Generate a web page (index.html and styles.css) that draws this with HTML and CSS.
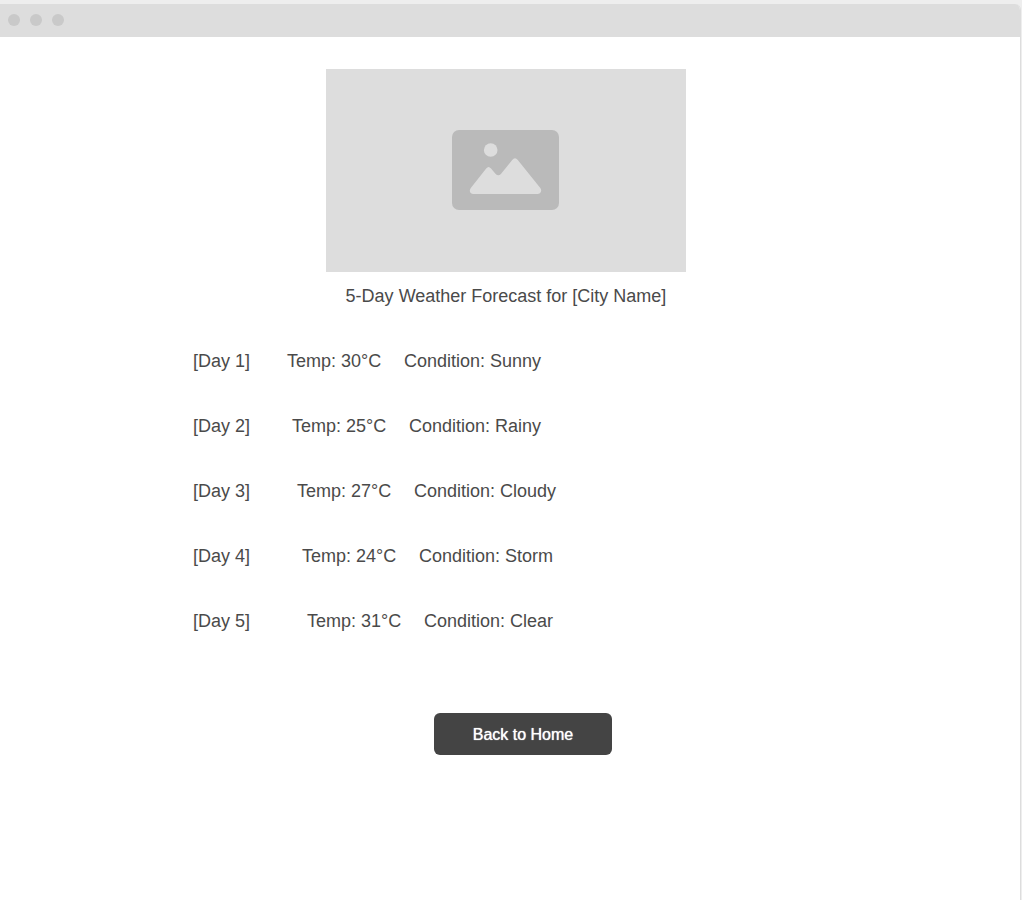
FILE: index.html
```html
<!DOCTYPE html>
<html lang="en">
<head>
<meta charset="utf-8">
<title>5-Day Weather Forecast</title>
<link rel="stylesheet" href="styles.css">
</head>
<body>
<div class="window">
  <header class="titlebar">
    <span class="dot"></span>
    <span class="dot"></span>
    <span class="dot"></span>
  </header>
  <main class="content">
    <div class="picture">
      <svg class="picture-icon" viewBox="0 0 107 80" role="img" aria-label="Picture placeholder">
        <rect width="107" height="80" rx="7" fill="#bababa"/>
        <circle cx="38.700" cy="20" r="6.800" fill="#ddd"/>
        <path d="M18.800 58 34.200 38.400Q36.600 35.400 39 38.400L43.700 44Q46.300 46.600 48.900 44L60.200 29.900Q63 26.400 65.800 29.900L88.300 58C90.300 60.800 88.800 64 85.300 64H21.500C18 64 16.700 60.800 18.800 58Z" fill="#ddd"/>
      </svg>
    </div>
    <h1 class="title">5-Day Weather Forecast for [City Name]</h1>
    <ul class="forecast">
      <li class="day"><span>[Day 1]</span><span>Temp: 30°C</span><span>Condition: Sunny</span></li>
      <li class="day"><span>[Day 2]</span><span>Temp: 25°C</span><span>Condition: Rainy</span></li>
      <li class="day"><span>[Day 3]</span><span>Temp: 27°C</span><span>Condition: Cloudy</span></li>
      <li class="day"><span>[Day 4]</span><span>Temp: 24°C</span><span>Condition: Storm</span></li>
      <li class="day"><span>[Day 5]</span><span>Temp: 31°C</span><span>Condition: Clear</span></li>
    </ul>
    <button class="home-button" type="button">Back to Home</button>
  </main>
</div>
</body>
</html>
```
FILE: styles.css
```css
* {
  box-sizing: border-box;
}

body {
  margin: 0;
  padding: 4px 1px 0 0;
  background: #eee;
  color: #4a4a4a;
  font: 18px/24px "Liberation Sans", Arial, sans-serif;
}

.window {
  display: flex;
  flex-direction: column;
  min-height: calc(100vh - 4px);
  border-right: 1px solid #ddd;
  border-top-right-radius: 6px;
  overflow: hidden;
  background: #fff;
}

.titlebar {
  display: flex;
  gap: 10px;
  padding: 10px 8px 11px;
  background: #ddd;
}

.dot {
  width: 12px;
  height: 12px;
  border-radius: 50%;
  background: #c9c9c9;
}

.content {
  display: flex;
  flex-direction: column;
  align-items: center;
  padding: 32px 8px 32px 0;
}

.picture {
  display: flex;
  align-items: center;
  justify-content: center;
  width: 100%;
  max-width: 360px;
  aspect-ratio: 360 / 203;
  padding: 0 1px 1px 0;
  background: #ddd;
}

.picture-icon {
  width: 107px;
}

.title {
  margin: 12px 0 41px;
  font-size: 18px;
  font-weight: 400;
}

.forecast {
  display: flex;
  flex-direction: column;
  gap: 41px;
  width: 100%;
  max-width: 626px;
  margin: 0 0 80px;
  padding: 0;
  list-style: none;
}

/* Each day's details start one step further in than the day before. */
.day {
  --step: 0;
  display: grid;
  grid-template-columns: calc(94px + var(--step) * 5px) 117px auto;
}

.day:nth-child(2) { --step: 1; }
.day:nth-child(3) { --step: 2; }
.day:nth-child(4) { --step: 3; }
.day:nth-child(5) { --step: 4; }

.home-button {
  margin-left: 34px;
  padding: 10px 39px 8px;
  border: 0;
  border-radius: 6px;
  background: #444;
  color: #fff;
  font: 16px/24px "Liberation Sans", Arial, sans-serif;
  text-shadow: 0 0 1px #fff;
}
```
